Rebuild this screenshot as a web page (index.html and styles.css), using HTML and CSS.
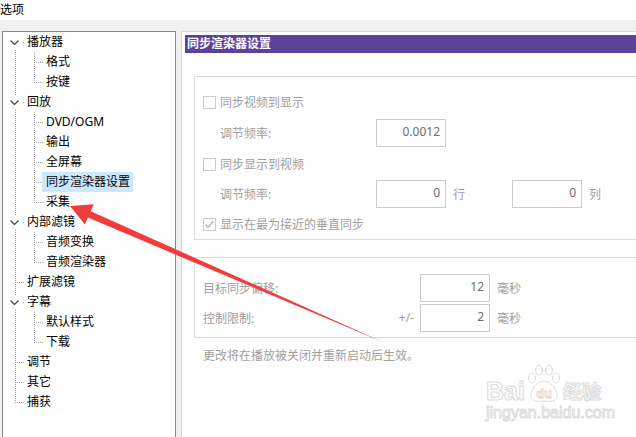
FILE: index.html
```html
<!DOCTYPE html>
<html lang="zh-CN">
<head>
    <meta charset="UTF-8">
    <title>选项</title>
    <link rel="stylesheet" href="styles.css">
</head>
<body>
    <div class="titlebar">选项</div>

    <div class="main">
        <div class="tree">
            <div class="row"><span class="cell toggle first"><svg width="9" height="5" viewBox="0 0 9 5"><polyline points="0.5,0.5 4.5,4.5 8.5,0.5" /></svg></span><span class="label">播放器</span></div>
            <div class="row"><span class="cell pipe"></span><span class="cell tee"></span><span class="label">格式</span></div>
            <div class="row"><span class="cell pipe"></span><span class="cell elbow"></span><span class="label">按键</span></div>
            <div class="row"><span class="cell toggle"><svg width="9" height="5" viewBox="0 0 9 5"><polyline points="0.5,0.5 4.5,4.5 8.5,0.5" /></svg></span><span class="label">回放</span></div>
            <div class="row"><span class="cell pipe"></span><span class="cell tee"></span><span class="label">DVD/OGM</span></div>
            <div class="row"><span class="cell pipe"></span><span class="cell tee"></span><span class="label">输出</span></div>
            <div class="row"><span class="cell pipe"></span><span class="cell tee"></span><span class="label">全屏幕</span></div>
            <div class="row"><span class="cell pipe"></span><span class="cell tee"></span><span class="label selected">同步渲染器设置</span></div>
            <div class="row"><span class="cell pipe"></span><span class="cell elbow"></span><span class="label">采集</span></div>
            <div class="row"><span class="cell toggle"><svg width="9" height="5" viewBox="0 0 9 5"><polyline points="0.5,0.5 4.5,4.5 8.5,0.5" /></svg></span><span class="label">内部滤镜</span></div>
            <div class="row"><span class="cell pipe"></span><span class="cell tee"></span><span class="label">音频变换</span></div>
            <div class="row"><span class="cell pipe"></span><span class="cell elbow"></span><span class="label">音频渲染器</span></div>
            <div class="row"><span class="cell tee"></span><span class="label">扩展滤镜</span></div>
            <div class="row"><span class="cell toggle"><svg width="9" height="5" viewBox="0 0 9 5"><polyline points="0.5,0.5 4.5,4.5 8.5,0.5" /></svg></span><span class="label">字幕</span></div>
            <div class="row"><span class="cell pipe"></span><span class="cell tee"></span><span class="label">默认样式</span></div>
            <div class="row"><span class="cell pipe"></span><span class="cell elbow"></span><span class="label">下载</span></div>
            <div class="row"><span class="cell tee"></span><span class="label">调节</span></div>
            <div class="row"><span class="cell tee"></span><span class="label">其它</span></div>
            <div class="row"><span class="cell elbow"></span><span class="label">捕获</span></div>
        </div>

        <div class="panel">
            <div class="panel-header">同步渲染器设置</div>

            <div class="group group-sync">
                <div class="check-row">
                    <span class="checkbox"></span>同步视频到显示
                </div>
                <div class="field-row indent gap7">
                    <span class="field-label">调节频率:</span>
                    <span class="input">0.0012</span>
                </div>
                <div class="check-row gap7">
                    <span class="checkbox"></span>同步显示到视频
                </div>
                <div class="field-row indent gap6">
                    <span class="field-label">调节频率:</span>
                    <span class="input">0</span>
                    <span class="unit">行</span>
                    <span class="input second">0</span>
                    <span class="unit">列</span>
                </div>
                <div class="check-row gap6">
                    <span class="checkbox checked"><svg width="11" height="11" viewBox="0 0 11 11"><polyline points="1.5,5.5 4,8.5 9.5,2" /></svg></span>显示在最为接近的垂直同步
                </div>
            </div>

            <div class="group group-offset">
                <div class="field-row">
                    <span class="field-label wide">目标同步偏移:</span>
                    <span class="input">12</span>
                    <span class="unit">毫秒</span>
                </div>
                <div class="field-row gap2">
                    <span class="field-label wide split"><span>控制限制:</span><span>+/-</span></span>
                    <span class="input">2</span>
                    <span class="unit">毫秒</span>
                </div>
            </div>

            <div class="note">更改将在播放被关闭并重新启动后生效。</div>
        </div>
    </div>

    <!-- annotation drawn over the screenshot -->
    <svg class="arrow" width="636" height="437" viewBox="0 0 636 437">
        <polygon points="70,206 93.7,204.3 90.7,211.2 385,343 87.9,217.6 84.9,224.5" />
    </svg>

    <div class="watermark">
        <div class="wm-logo">
            <span class="wm-bai">Bai</span>
            <svg class="wm-paw" width="36" height="40" viewBox="0 0 36 40">
                <ellipse cx="6" cy="14" rx="3.5" ry="5" />
                <ellipse cx="13" cy="6" rx="3.5" ry="5" />
                <ellipse cx="23" cy="6" rx="3.5" ry="5" />
                <ellipse cx="30" cy="14" rx="3.5" ry="5" />
                <path d="M18 17 C10 17 4 28 5 33 C6 38 12 38 18 37 C24 38 30 38 31 33 C32 28 26 17 18 17 Z" />
                <text x="18" y="34" text-anchor="middle">du</text>
            </svg>
            <span class="wm-cn">经验</span>
        </div>
        <div class="wm-url">jingyan.baidu.com</div>
    </div>
</body>
</html>
```

FILE: styles.css
```css
body {
    margin: 0;
    width: 636px;
    height: 437px;
    overflow: hidden;
    position: relative;
    background-color: #f0f0f0;
    font-family: "Noto Sans", "Noto Sans CJK SC", sans-serif;
    font-size: 12px;
    color: #000000;
}

.titlebar {
    height: 20px;
    line-height: 20px;
    background-color: #ffffff;
}

.main {
    display: flex;
    align-items: flex-start;
    padding: 11px 0 0 2px;
    gap: 5px;
}

/* tree */
.tree {
    box-sizing: border-box;
    flex: 0 0 174px;
    height: 420px;
    border: 1px solid #828790;
    background-color: #ffffff;
    padding-left: 3px;
}

.row {
    display: flex;
    height: 20px;
    line-height: 20px;
}

.cell {
    flex: 0 0 19px;
    height: 20px;
    display: flex;
    align-items: center;
    background-repeat: no-repeat;
}

.pipe {
    background-image: repeating-linear-gradient(#a0a0a0 0 1px, transparent 1px 2px);
    background-position: 9px 0;
    background-size: 1px 20px;
}

.tee {
    background-image:
        repeating-linear-gradient(#a0a0a0 0 1px, transparent 1px 2px),
        repeating-linear-gradient(to right, #a0a0a0 0 1px, transparent 1px 2px);
    background-position: 9px 0, 9px 10px;
    background-size: 1px 20px, 10px 1px;
}

.elbow {
    background-image:
        repeating-linear-gradient(#a0a0a0 0 1px, transparent 1px 2px),
        repeating-linear-gradient(to right, #a0a0a0 0 1px, transparent 1px 2px);
    background-position: 9px 0, 9px 10px;
    background-size: 1px 11px, 10px 1px;
}

.toggle {
    background-image:
        repeating-linear-gradient(#a0a0a0 0 1px, transparent 1px 2px),
        repeating-linear-gradient(#a0a0a0 0 1px, transparent 1px 2px),
        linear-gradient(#a0a0a0, #a0a0a0);
    background-position: 9px 0, 9px 18px, 17px 10px;
    background-size: 1px 4px, 1px 2px, 1px 1px;
}

.toggle.first {
    background-image:
        repeating-linear-gradient(#a0a0a0 0 1px, transparent 1px 2px),
        linear-gradient(#a0a0a0, #a0a0a0);
    background-position: 9px 18px, 17px 10px;
    background-size: 1px 2px, 1px 1px;
}

.toggle svg {
    margin-left: 4px;
    fill: none;
    stroke: #4d4d4d;
    stroke-width: 1.3;
}

.label {
    margin-left: -2px;
    padding: 0 3px 0 4px;
    white-space: nowrap;
}

.selected {
    background-color: #cce8ff;
}

/* settings page */
.panel {
    box-sizing: border-box;
    flex: 0 0 520px;
    height: 420px;
    border: 1px solid #d9d9d9;
    background-color: #ffffff;
    padding: 3px 3px 0 3px;
    color: #a0a0a0;
}

.panel-header {
    height: 18px;
    line-height: 18px;
    padding-left: 2px;
    background-color: #5b4399;
    color: #ffffff;
    font-weight: bold;
}

.group {
    margin-left: 9px;
    border: 1px solid #dcdcdc;
    padding-left: 8px;
}

.group-sync {
    margin-top: 23px;
    padding-top: 15px;
    padding-bottom: 5px;
}

.group-offset {
    margin-top: 17px;
    padding-top: 16px;
    padding-bottom: 5px;
}

.check-row {
    display: flex;
    align-items: center;
    height: 20px;
}

.checkbox {
    box-sizing: border-box;
    width: 13px;
    height: 13px;
    border: 1px solid #cccccc;
    margin-right: 4px;
    display: flex;
    align-items: center;
    justify-content: center;
}

.checkbox svg {
    fill: none;
    stroke: #b4b4b4;
    stroke-width: 1.2;
}

.field-row {
    display: flex;
    align-items: center;
    height: 28px;
}

.indent {
    padding-left: 17px;
}

.gap7 { margin-top: 7px; }
.gap6 { margin-top: 6px; }
.gap2 { margin-top: 2px; }

.field-label {
    flex: 0 0 156px;
}

.field-label.wide {
    flex: 0 0 217px;
}

.split {
    display: flex;
    justify-content: space-between;
}

.split span:last-child {
    margin-right: 6px;
}

.input {
    box-sizing: border-box;
    width: 70px;
    height: 28px;
    line-height: 24px;
    border: 1px solid #cccccc;
    padding-right: 5px;
    text-align: right;
    color: #6d6d6d;
}

.input.second {
    margin-left: 47px;
}

.unit {
    margin-left: 7px;
}

.note {
    margin: 10px 0 0 18px;
    line-height: 16px;
}

/* overlays */
.arrow {
    position: absolute;
    left: 0;
    top: 0;
    pointer-events: none;
}

.arrow polygon {
    fill: #f03c3c;
}

.watermark {
    position: absolute;
    left: 486px;
    top: 364px;
    pointer-events: none;
}

.wm-logo {
    display: flex;
    align-items: flex-end;
}

.wm-bai {
    font-family: "Liberation Sans", sans-serif;
    font-weight: bold;
    font-size: 25px;
    line-height: 26px;
    color: #ffffff;
    -webkit-text-stroke: 1px #dadada;
}

.wm-paw {
    margin: 0 1px;
}

.wm-paw ellipse,
.wm-paw path {
    fill: #ffffff;
    stroke: #dadada;
    stroke-width: 1;
}

.wm-paw text {
    font-family: "Liberation Sans", sans-serif;
    font-weight: bold;
    font-size: 13px;
    fill: #ffffff;
    stroke: #d6d6d6;
    stroke-width: 0.8;
}

.wm-cn {
    font-family: "Noto Sans CJK SC", sans-serif;
    font-weight: bold;
    font-size: 19px;
    line-height: 26px;
    color: #ffffff;
    -webkit-text-stroke: 1px #dadada;
}

.wm-url {
    font-family: "Liberation Sans", sans-serif;
    font-size: 16px;
    line-height: 18px;
    color: #ffffff;
    -webkit-text-stroke: 1px #dcdcdc;
}
```
